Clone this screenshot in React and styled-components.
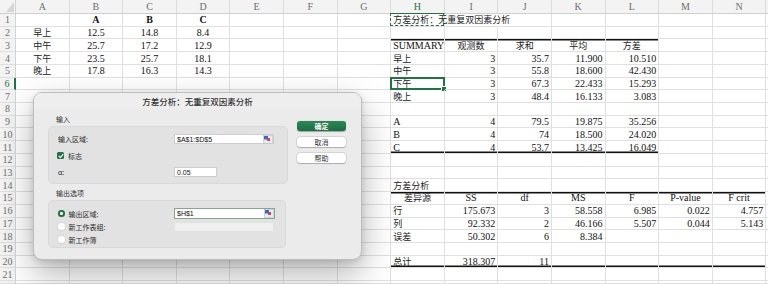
import React from "react";
import styled, { createGlobalStyle, css } from "styled-components";

const GlobalStyle = createGlobalStyle`
  html, body {
    margin: 0;
    padding: 0;
    background: #fff;
    overflow: hidden;
  }
`;

const COLS = ["A", "B", "C", "D", "E", "F", "G", "H", "I", "J", "K", "L", "M", "N"];
const ROWS = 21;
const ACTIVE_COL = "H";
const ACTIVE_ROW = 6;

const cells = {};
const put = (ref, text, align = "right", extra = {}) => {
  cells[ref] = { text, align, ...extra };
};

["A", "B", "C"].forEach((t, i) => put(`${"BCD"[i]}1`, t, "center", { bold: true }));
[
  ["早上", "12.5", "14.8", "8.4"],
  ["中午", "25.7", "17.2", "12.9"],
  ["下午", "23.5", "25.7", "18.1"],
  ["晚上", "17.8", "16.3", "14.3"],
].forEach((r, i) =>
  r.forEach((t, j) => put(`${"ABCD"[j]}${i + 2}`, t, "center", { kai: j === 0 }))
);

put("H1", "方差分析：无重复双因素分析", "left", { kai: true });
["SUMMARY", "观测数", "求和", "平均", "方差"].forEach((t, j) =>
  put(`${"HIJKL"[j]}3`, t, j === 0 ? "left" : "center", { kai: j > 0 })
);
[
  [4, ["早上", "3", "35.7", "11.900", "10.510"]],
  [5, ["中午", "3", "55.8", "18.600", "42.430"]],
  [6, ["下午", "3", "67.3", "22.433", "15.293"]],
  [7, ["晚上", "3", "48.4", "16.133", "3.083"]],
  [9, ["A", "4", "79.5", "19.875", "35.256"]],
  [10, ["B", "4", "74", "18.500", "24.020"]],
  [11, ["C", "4", "53.7", "13.425", "16.049"]],
].forEach(([row, r]) =>
  r.forEach((t, j) =>
    put(`${"HIJKL"[j]}${row}`, t, j === 0 ? "left" : "right", { kai: j === 0 && row < 9 })
  )
);

put("H14", "方差分析", "left", { kai: true });
["差异源", "SS", "df", "MS", "F", "P-value", "F crit"].forEach((t, j) =>
  put(`${"HIJKLMN"[j]}15`, t, "center", { kai: j === 0 })
);
[
  [16, ["行", "175.673", "3", "58.558", "6.985", "0.022", "4.757"]],
  [17, ["列", "92.332", "2", "46.166", "5.507", "0.044", "5.143"]],
  [18, ["误差", "50.302", "6", "8.384"]],
  [20, ["总计", "318.307", "11"]],
].forEach(([row, r]) =>
  r.forEach((t, j) => put(`${"HIJKLMN"[j]}${row}`, t, j === 0 ? "left" : "right", { kai: j === 0 }))
);

const inRange = (col, from, to) => col >= from && col <= to;
const topRule = (col, row) =>
  (row === 3 && inRange(col, "H", "L")) || (row === 15 && inRange(col, "H", "N"));
const bottomRule = (col, row) =>
  (row === 11 && inRange(col, "H", "L")) || (row === 20 && inRange(col, "H", "N"));

const GREEN = "#1f7444";

/* ---------- sheet ---------- */

const Sheet = styled.div`
  position: relative;
  width: 768px;
  height: 284px;
  overflow: hidden;
  display: grid;
  grid-template-columns: 16px repeat(14, 53.6px) 1fr;
  grid-template-rows: 14px repeat(${ROWS}, 12.73px) 1fr;
  font-family: "Liberation Serif", "Noto Sans CJK SC", serif;
  font-size: 10px;
  color: #111;
`;

const Corner = styled.div`
  position: relative;
  background: #f3f3f3;
  border-right: 1px solid #d3d3d3;
  border-bottom: 1px solid #cfcfcf;
  box-sizing: border-box;

  &::after {
    content: "";
    position: absolute;
    right: 1px;
    bottom: 1px;
    border-left: 8px solid transparent;
    border-bottom: 10px solid #d6d6d6;
  }
`;

const ColHeader = styled.div`
  background: #f3f3f3;
  color: ${(p) => (p.$active ? GREEN : "#6f6f6f")};
  border-right: 1px solid #dcdcdc;
  border-bottom: 1px solid ${(p) => (p.$active ? GREEN : "#cfcfcf")};
  box-sizing: border-box;
  display: flex;
  align-items: center;
  justify-content: center;
  font-size: 10px;
`;

const RowHeader = styled.div`
  background: #f3f3f3;
  color: ${(p) => (p.$active ? GREEN : "#6f6f6f")};
  border-right: ${(p) => (p.$active ? `2px solid ${GREEN}` : "1px solid #d3d3d3")};
  border-bottom: 1px solid #dedede;
  box-sizing: border-box;
  display: flex;
  align-items: center;
  justify-content: center;
  font-size: 10px;
`;

const Cell = styled.div`
  position: relative;
  box-sizing: border-box;
  border-right: ${(p) => (p.$noRight ? "1px solid transparent" : "1px solid #e0e0e0")};
  border-bottom: 1px solid #e0e0e0;
  padding: 0 2px;
  display: flex;
  align-items: center;
  justify-content: ${(p) =>
    p.$align === "left" ? "flex-start" : p.$align === "center" ? "center" : "flex-end"};
  white-space: nowrap;
  font-weight: ${(p) => (p.$bold ? 700 : 400)};
  font-family: ${(p) =>
    p.$kai ? '"Noto Sans CJK SC", "Liberation Serif", sans-serif' : "inherit"};
  font-size: ${(p) => (p.$kai ? "9px" : "10px")};
  color: ${(p) => (p.$kai ? "#222" : "#111")};
  box-shadow: ${(p) =>
    [p.$top && "inset 0 1.5px 0 #111", p.$bottom && "inset 0 -1.5px 0 #111"]
      .filter(Boolean)
      .join(", ") || "none"};

  ${(p) =>
    p.$selected &&
    css`
      &::before {
        content: "";
        position: absolute;
        inset: -1px -1px -1px -1px;
        border: 2px solid ${GREEN};
      }
      &::after {
        content: "";
        position: absolute;
        right: -3px;
        bottom: -3px;
        width: 4px;
        height: 4px;
        background: ${GREEN};
        border: 1px solid #fff;
      }
    `}

  ${(p) =>
    p.$marquee &&
    css`
      &::before {
        content: "";
        position: absolute;
        inset: -1px 0 0 -1px;
        border: 1.5px dashed ${GREEN};
      }
    `}
`;

/* ---------- dialog ---------- */

const Dialog = styled.div`
  position: absolute;
  left: 33px;
  top: 92px;
  width: 329px;
  height: 168px;
  box-sizing: border-box;
  background: #ebebeb;
  border: 0.5px solid #bdbdbd;
  border-radius: 9px;
  box-shadow: 0 14px 34px rgba(0, 0, 0, 0.3), 0 2px 6px rgba(0, 0, 0, 0.12);
  font-family: "Noto Sans CJK SC", "Liberation Sans", sans-serif;
  font-size: 7px;
  color: #2b2b2b;
  display: flex;
  flex-direction: column;
  overflow: hidden;
`;

const TitleBar = styled.div`
  height: 16px;
  flex: none;
  display: flex;
  align-items: center;
  justify-content: center;
  background: #eeeeee;
  font-size: 8.5px;
  font-weight: 500;
  color: #333;
`;

const Body = styled.div`
  display: flex;
  padding-left: 14px;
`;

const Options = styled.div`
  width: 240px;
  display: flex;
  flex-direction: column;
`;

const SectionLabel = styled.div`
  height: 10px;
  line-height: 10px;
  margin: ${(p) => (p.$first ? "5px 0 2px 8px" : "4px 0 2px 8px")};
  color: #333;
`;

const Group = styled.div`
  box-sizing: border-box;
  width: ${(p) => p.$w}px;
  height: ${(p) => p.$h}px;
  background: #e2e2e2;
  border: 0.5px solid #d9d9d9;
  border-radius: 5px;
  padding: ${(p) => p.$pt}px 0 0 9px;
  display: flex;
  flex-direction: column;
  gap: ${(p) => p.$gap}px;
`;

const FieldRow = styled.div`
  height: ${(p) => p.$h}px;
  display: flex;
  align-items: center;
`;

const FieldLabel = styled.div`
  width: 116px;
  flex: none;
  display: flex;
  align-items: center;
  gap: 4px;
  color: #2b2b2b;
`;

const TextInput = styled.div`
  box-sizing: border-box;
  width: ${(p) => p.$w}px;
  height: ${(p) => (p.$focused ? 11 : 10)}px;
  background: ${(p) => (p.$disabled ? "#efefef" : "#fff")};
  border: ${(p) =>
    p.$focused ? "1.5px solid #7ea98b" : p.$disabled ? "0.5px solid #e2e2e2" : "0.5px solid #cdcdcd"};
  display: flex;
  align-items: center;
  justify-content: space-between;
  padding-left: 2px;
  font-family: "Liberation Sans", sans-serif;
  font-size: 7px;
  color: #111;
`;

const Buttons = styled.div`
  margin-left: 9px;
  padding-top: 12px;
  display: flex;
  flex-direction: column;
  gap: 6px;
`;

const Button = styled.div`
  box-sizing: border-box;
  width: 49px;
  height: 10px;
  border-radius: 3px;
  display: flex;
  align-items: center;
  justify-content: center;
  font-size: 7px;
  ${(p) =>
    p.$primary
      ? css`
          background: linear-gradient(#2c8856, #1c6d41);
          color: #fff;
          font-weight: 600;
          box-shadow: 0 0.5px 1px rgba(0, 0, 0, 0.3);
        `
      : css`
          background: #fff;
          color: #333;
          box-shadow: 0 0 0 0.5px rgba(0, 0, 0, 0.15), 0 0.5px 1px rgba(0, 0, 0, 0.2);
        `}
`;

const CheckBox = styled.div`
  width: 7px;
  height: 7px;
  border-radius: 1.5px;
  background: ${GREEN};
  display: flex;
  align-items: center;
  justify-content: center;
  margin-left: -1px;
`;

const Radio = styled.div`
  box-sizing: border-box;
  width: 6.5px;
  height: 6.5px;
  border-radius: 50%;
  flex: none;
  background: ${(p) => (p.$on ? GREEN : "#fff")};
  box-shadow: ${(p) => (p.$on ? "none" : "0 0 0 0.5px #cfcfcf, 0 0.5px 1px rgba(0,0,0,0.15)")};
  display: flex;
  align-items: center;
  justify-content: center;

  &::after {
    content: "";
    width: 2.5px;
    height: 2.5px;
    border-radius: 50%;
    background: ${(p) => (p.$on ? "#fff" : "transparent")};
  }
`;

const RangePicker = () => (
  <svg width="10" height="9" viewBox="0 0 10 9">
    <rect x="0.5" y="0.5" width="9" height="8" fill="#e6ebf3" stroke="#b7bcc6" strokeWidth="0.6" />
    <rect x="1" y="1" width="4" height="3.5" fill="#3d68c9" />
    <rect x="4" y="3" width="3" height="3" fill="#d84545" />
  </svg>
);

const Check = () => (
  <svg width="6" height="6" viewBox="0 0 6 6">
    <path d="M1 3.2 L2.4 4.6 L5 1.4" fill="none" stroke="#fff" strokeWidth="1.1" strokeLinecap="round" strokeLinejoin="round" />
  </svg>
);

const AnovaDialog = () => (
  <Dialog>
    <TitleBar>方差分析：无重复双因素分析</TitleBar>
    <Body>
      <Options>
        <SectionLabel $first>输入</SectionLabel>
        <Group $w={240} $h={58} $pt={7} $gap={6.5}>
          <FieldRow $h={10}>
            <FieldLabel>输入区域:</FieldLabel>
            <TextInput $w={100}>
              $A$1:$D$5
              <RangePicker />
            </TextInput>
          </FieldRow>
          <FieldRow $h={10}>
            <FieldLabel>
              <CheckBox>
                <Check />
              </CheckBox>
              标志
            </FieldLabel>
          </FieldRow>
          <FieldRow $h={10}>
            <FieldLabel>α:</FieldLabel>
            <TextInput $w={43}>0.05</TextInput>
          </FieldRow>
        </Group>
        <SectionLabel>输出选项</SectionLabel>
        <Group $w={238} $h={48} $pt={7} $gap={2}>
          <FieldRow $h={11}>
            <FieldLabel>
              <Radio $on />
              输出区域:
            </FieldLabel>
            <TextInput $w={101} $focused>
              $H$1
              <RangePicker />
            </TextInput>
          </FieldRow>
          <FieldRow $h={11}>
            <FieldLabel>
              <Radio />
              新工作表组:
            </FieldLabel>
            <TextInput $w={100} $disabled />
          </FieldRow>
          <FieldRow $h={11}>
            <FieldLabel>
              <Radio />
              新工作簿
            </FieldLabel>
          </FieldRow>
        </Group>
      </Options>
      <Buttons>
        <Button $primary>确定</Button>
        <Button>取消</Button>
        <Button>帮助</Button>
      </Buttons>
    </Body>
  </Dialog>
);

const App = () => {
  const grid = [];
  grid.push(<Corner key="corner" />);
  COLS.forEach((c) =>
    grid.push(
      <ColHeader key={`h-${c}`} $active={c === ACTIVE_COL}>
        {c}
      </ColHeader>
    )
  );
  grid.push(<ColHeader key="h-rest" />);

  for (let row = 1; row <= ROWS + 1; row++) {
    grid.push(
      <RowHeader key={`r-${row}`} $active={row === ACTIVE_ROW}>
        {row <= ROWS ? row : null}
      </RowHeader>
    );
    COLS.forEach((col) => {
      const ref = `${col}${row}`;
      const info = cells[ref];
      grid.push(
        <Cell
          key={ref}
          $align={info ? info.align : "left"}
          $bold={info && info.bold}
          $kai={info && info.kai}
          $top={topRule(col, row)}
          $bottom={bottomRule(col, row)}
          $selected={col === ACTIVE_COL && row === ACTIVE_ROW}
          $marquee={ref === "H1"}
          $noRight={row === 1 && col === "I"}
        >
          {info ? info.text : null}
        </Cell>
      );
    });
    grid.push(<Cell key={`rest-${row}`} />);
  }

  return (
    <>
      <GlobalStyle />
      <Sheet>
        {grid}
        <AnovaDialog />
      </Sheet>
    </>
  );
};

export default App;
